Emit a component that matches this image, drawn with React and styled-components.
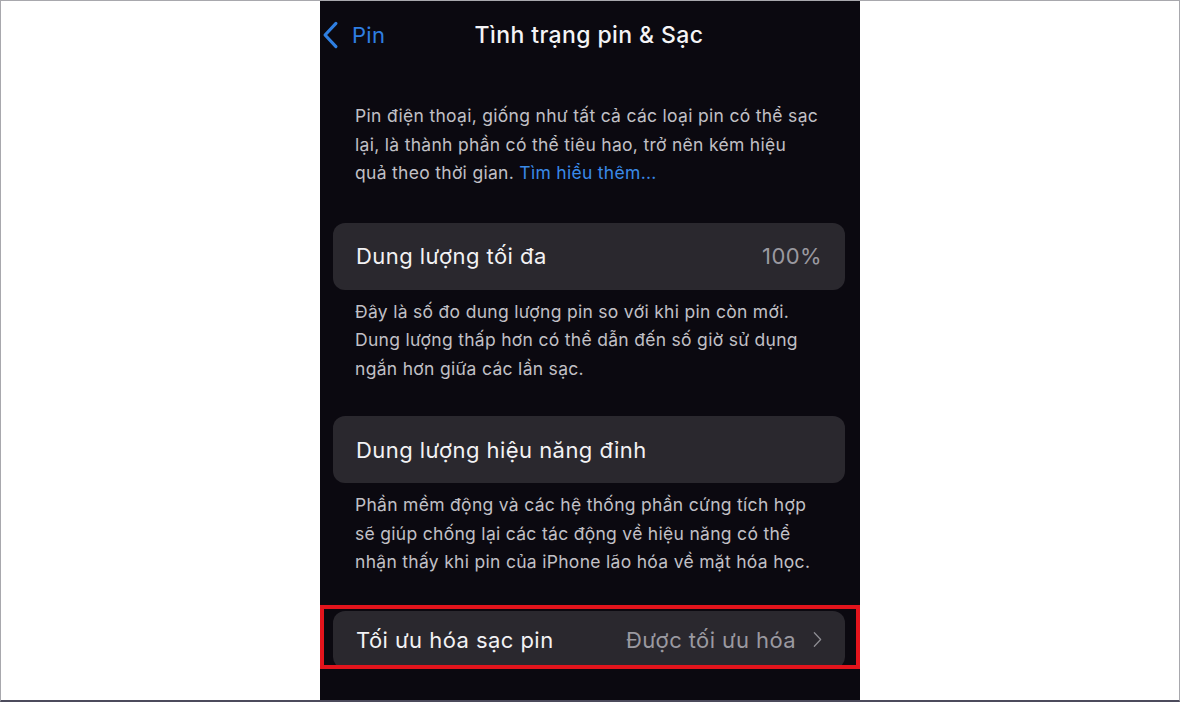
import styled, { createGlobalStyle } from "styled-components";

const GlobalStyle = createGlobalStyle`
    html, body {
        margin: 0;
        padding: 0;
        background: #ffffff;
    }
    #root {
        height: 702px;
    }
`;

const Page = styled.div`
    box-sizing: border-box;
    width: 1180px;
    height: 702px;
    display: flex;
    justify-content: center;
    background: #ffffff;
    border: 1px solid #a8a8ad;
    border-bottom: 2px solid #4c4b5c;
    overflow: hidden;
    font-family: Inter, "Noto Sans", "Liberation Sans", sans-serif;
`;

const Phone = styled.div`
    box-sizing: border-box;
    width: 540px;
    height: 100%;
    padding: 0 15px 0 13px;
    background: #0b0910;
    display: flex;
    flex-direction: column;
`;

const NavBar = styled.div`
    position: relative;
    height: 67px;
    display: flex;
    align-items: center;
    justify-content: center;
`;

const BackButton = styled.div`
    position: absolute;
    left: -11px;
    top: 0;
    height: 67px;
    display: flex;
    align-items: center;
    gap: 13px;
    color: #2f7fe2;
    font-size: 22px;
    letter-spacing: 0.3px;
`;

const Title = styled.div`
    color: #f4f4f6;
    font-size: 23px;
    font-weight: 500;
    letter-spacing: 0.4px;
`;

const Note = styled.p`
    margin: ${(p) => p.$top}px 0 0;
    padding: 0 22px;
    color: #c1c0c6;
    font-size: 17.5px;
    line-height: 28.5px;
    letter-spacing: 0.3px;
    white-space: nowrap;
`;

const Link = styled.span`
    color: #3a8ae8;
`;

const Card = styled.div`
    margin-top: ${(p) => p.$top}px;
    height: ${(p) => p.$h || 67}px;
    flex-shrink: 0;
    box-sizing: border-box;
    padding: 0 23px;
    display: flex;
    align-items: center;
    justify-content: space-between;
    background: #2a282e;
    border-radius: 12px;
`;

const Label = styled.span`
    color: #f2f2f4;
    font-size: 22px;
    letter-spacing: 0.45px;
`;

const Value = styled.span`
    display: flex;
    align-items: center;
    gap: 17px;
    color: #9a99a0;
    font-size: 22px;
    letter-spacing: 0.4px;
`;

const Highlight = styled.div`
    margin: 28px -15px 0 -13px;
    height: 64px;
    flex-shrink: 0;
    box-sizing: border-box;
    padding: 2px 11px 0 9px;
    border: 4px solid #e3141c;
    overflow: hidden;
`;

const ArrowFlip = styled.span`
    display: flex;
    transform: scaleX(-1);
`;

const Chevron = ({ color, w, h, stroke }) => (
    <svg width={w} height={h} viewBox="0 0 10 18" fill="none">
        <path
            d="M8.5 1.5 L1.5 9 L8.5 16.5"
            stroke={color}
            strokeWidth={stroke}
            strokeLinecap="round"
            strokeLinejoin="round"
        />
    </svg>
);

const App = () => {
    return (
        <>
            <GlobalStyle />
            <Page>
                <Phone>
                    <NavBar>
                        <BackButton>
                            <Chevron color="#2f7fe2" w={17} h={28} stroke={2} />
                            Pin
                        </BackButton>
                        <Title>Tình trạng pin &amp; Sạc</Title>
                    </NavBar>

                    <Note $top={34}>
                        Pin điện thoại, giống như tất cả các loại pin có thể sạc<br />
                        lại, là thành phần có thể tiêu hao, trở nên kém hiệu<br />
                        quả theo thời gian. <Link>Tìm hiểu thêm...</Link>
                    </Note>

                    <Card $top={35}>
                        <Label>Dung lượng tối đa</Label>
                        <Value>100%</Value>
                    </Card>
                    <Note $top={8}>
                        Đây là số đo dung lượng pin so với khi pin còn mới.<br />
                        Dung lượng thấp hơn có thể dẫn đến số giờ sử dụng<br />
                        ngắn hơn giữa các lần sạc.
                    </Note>

                    <Card $top={33}>
                        <Label>Dung lượng hiệu năng đỉnh</Label>
                    </Card>
                    <Note $top={8}>
                        Phần mềm động và các hệ thống phần cứng tích hợp<br />
                        sẽ giúp chống lại các tác động về hiệu năng có thể<br />
                        nhận thấy khi pin của iPhone lão hóa về mặt hóa học.
                    </Note>

                    <Highlight>
                        <Card $top={0} $h={58}>
                            <Label>Tối ưu hóa sạc pin</Label>
                            <Value>
                                Được tối ưu hóa
                                <ArrowFlip>
                                    <Chevron color="#8e8d93" w={9} h={17} stroke={1.4} />
                                </ArrowFlip>
                            </Value>
                        </Card>
                    </Highlight>
                </Phone>
            </Page>
        </>
    );
};

export default App;
